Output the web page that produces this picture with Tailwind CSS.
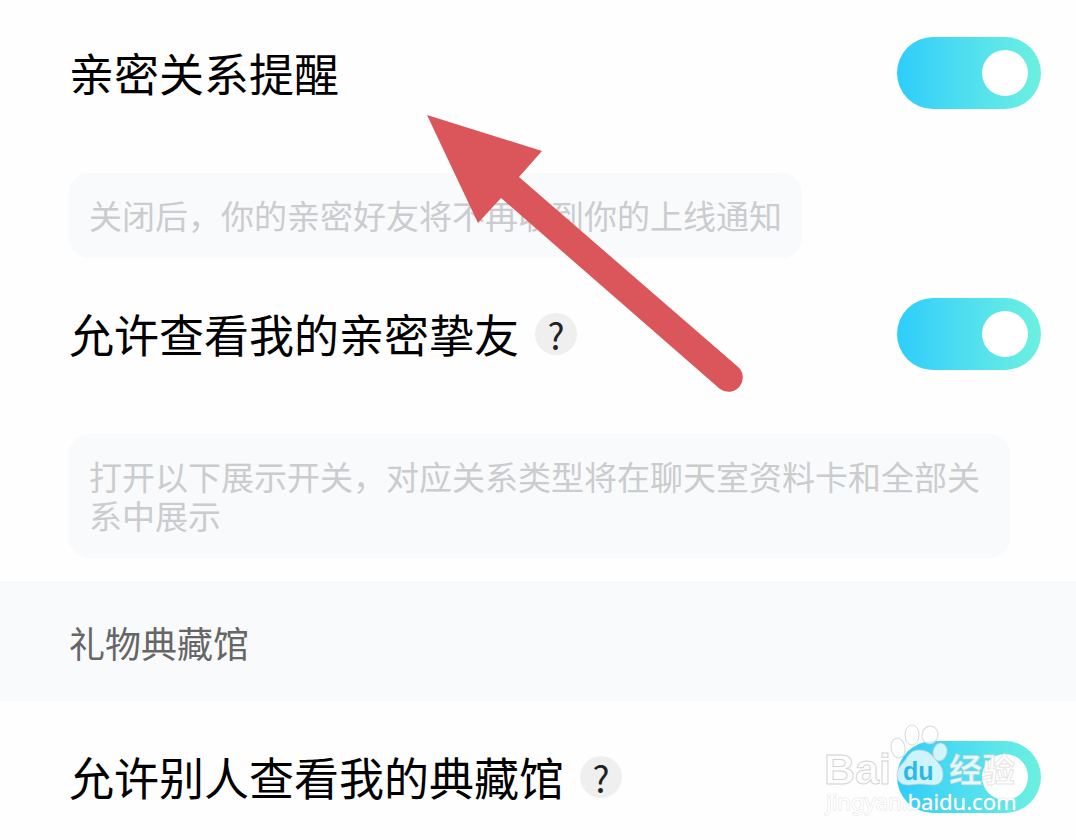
<!DOCTYPE html>
<html lang="zh-CN">
<head>
    <meta charset="UTF-8">
    <meta name="viewport" content="width=device-width, initial-scale=1.0">
    <script src="https://cdn.jsdelivr.net/npm/@tailwindcss/browser@4"></script>
    <title>隐私设置</title>
</head>
<body class="bg-[#fefefe] font-['Noto_Sans_CJK_SC',sans-serif] text-black">
    <main class="relative overflow-hidden pb-6">
        <section class="pt-[37px] pb-6">
            <div class="flex items-center justify-between pl-[69px] pr-[35px]">
                <label for="close-remind" class="text-[45px] leading-[72px]">亲密关系提醒</label>
                <input id="close-remind" type="checkbox" checked
                       class="h-[72px] w-36 shrink-0 cursor-pointer appearance-none rounded-full bg-gray-200 p-[13px] checked:bg-linear-to-r checked:from-[#2dcdfb] checked:to-[#6cf0e0] before:block before:size-[46px] before:rounded-full before:bg-white checked:before:translate-x-[72px]">
            </div>
            <p class="mt-16 ml-[69px] mr-[66px] w-fit rounded-[20px] bg-[#f9fafc] px-5 py-[23px] text-[33px] leading-[39px] text-[#cbccce]">关闭后，你的亲密好友将不再收到你的上线通知</p>

            <div class="mt-10 flex items-center justify-between pl-[69px] pr-[35px]">
                <div class="flex items-center gap-4">
                    <label for="view-friends" class="text-[45px] leading-[72px]">允许查看我的亲密挚友</label>
                    <button type="button" aria-label="说明" class="flex size-[42px] items-center justify-center rounded-full bg-[#efefef] text-[36px] leading-[40px] text-[#222]">?</button>
                </div>
                <input id="view-friends" type="checkbox" checked
                       class="h-[72px] w-36 shrink-0 cursor-pointer appearance-none rounded-full bg-gray-200 p-[13px] checked:bg-linear-to-r checked:from-[#2dcdfb] checked:to-[#6cf0e0] before:block before:size-[46px] before:rounded-full before:bg-white checked:before:translate-x-[72px]">
            </div>
            <p class="mt-16 ml-[69px] mr-[66px] w-fit rounded-[20px] bg-[#f9fafc] px-5 py-[23px] text-[33px] leading-[39px] text-[#cbccce]">打开以下展示开关，对应关系类型将在聊天室资料卡和全部关系中展示</p>
        </section>

        <h2 class="border-t border-[#f4f4f5] bg-[#f9fafc] py-8 pl-[69px] text-[36px] leading-[54px] text-[#666]">礼物典藏馆</h2>

        <section class="pt-10">
            <div class="flex items-center justify-between pl-[69px] pr-[35px]">
                <div class="flex items-center gap-4">
                    <label for="view-gifts" class="text-[45px] leading-[72px]">允许别人查看我的典藏馆</label>
                    <button type="button" aria-label="说明" class="flex size-[42px] items-center justify-center rounded-full bg-[#efefef] text-[36px] leading-[40px] text-[#222]">?</button>
                </div>
                <input id="view-gifts" type="checkbox" checked
                       class="h-[72px] w-36 shrink-0 cursor-pointer appearance-none rounded-full bg-gray-200 p-[13px] checked:bg-linear-to-r checked:from-[#2dcdfb] checked:to-[#6cf0e0] before:block before:size-[46px] before:rounded-full before:bg-white checked:before:translate-x-[72px]">
            </div>
        </section>

        <!-- arrow -->
        <svg class="pointer-events-none absolute top-[114px] left-[426px]" width="318" height="280" viewBox="426 114 318 280" aria-hidden="true">
            <path d="M427 115 L542 151 L519 177 L737 366 A14 14 0 0 1 720 389 L501 198 L478 223 Z" fill="#db565b"/>
        </svg>

        <!-- watermark -->
        <svg class="pointer-events-none absolute top-[720px] right-[51px]" width="205" height="104" viewBox="820 720 205 104" aria-hidden="true">
            <g fill="#fff" fill-opacity=".75" stroke="#c9c9c9" stroke-opacity=".7" stroke-width="1">
                <ellipse cx="898" cy="748" rx="7" ry="10" transform="rotate(-10 898 748)"/>
                <ellipse cx="912" cy="735" rx="7" ry="10"/>
                <ellipse cx="930" cy="735" rx="8" ry="9" transform="rotate(10 930 735)"/>
                <ellipse cx="940" cy="752" rx="7" ry="9" transform="rotate(12 940 752)"/>
                <path d="M919 750c-7 0-10 4-13 9s-9 8-9 16c0 7 5 10 11 10 5 0 7-1 12-1s8 1 13 1c7 0 10-4 10-11s-4-10-8-15c-4-6-9-9-16-9z"/>
            </g>
            <g class="font-['Liberation_Sans',sans-serif] font-bold">
                <text x="824" y="784" font-size="43" fill="#fff" fill-opacity=".8" stroke="#c9c9c9" stroke-opacity=".8" stroke-width="1">Bai</text>
                <text x="903" y="780" font-size="25" fill="#2bb9ea">du</text>
            </g>
            <text x="949" y="782" font-size="33" class="font-['Noto_Sans_CJK_SC',sans-serif] font-bold" fill="#fff" fill-opacity=".85" stroke="#c9c9c9" stroke-opacity=".5" stroke-width="1">经验</text>
            <text x="826" y="810" font-size="22" class="font-['Noto_Sans',sans-serif]" fill="#fff" stroke="#c9c9c9" stroke-opacity=".6" stroke-width="1" paint-order="stroke">jingyan.baidu.com</text>
        </svg>
    </main>
</body>
</html>
